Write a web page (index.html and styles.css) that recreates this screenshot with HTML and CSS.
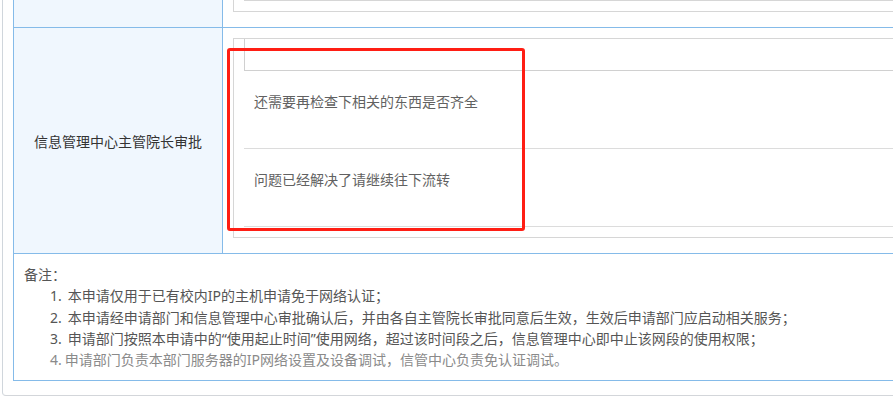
FILE: index.html
```html
<!DOCTYPE html>
<html lang="zh-CN">
<head>
<meta charset="utf-8">
<title>审批</title>
<link rel="stylesheet" href="styles.css">
</head>
<body>
<div class="card">
  <table class="form-table">
    <tr class="row-top">
      <td class="label-cell"></td>
      <td class="value-cell value-cell-top">
        <div class="op-box op-box-cut">
          <div class="op-line"></div>
        </div>
      </td>
    </tr>
    <tr>
      <td class="label-cell">信息管理中心主管院长审批</td>
      <td class="value-cell">
        <div class="op-box">
          <div class="op-head"></div>
          <div class="op-row">还需要再检查下相关的东西是否齐全</div>
          <div class="op-row">问题已经解决了请继续往下流转</div>
        </div>
      </td>
    </tr>
    <tr>
      <td class="notes-cell" colspan="2">
        <div class="notes-title">备注：</div>
        <div class="note"><span class="num">1.</span>本申请仅用于已有校内IP的主机申请免于网络认证；</div>
        <div class="note"><span class="num">2.</span>本申请经申请部门和信息管理中心审批确认后，并由各自主管院长审批同意后生效，生效后申请部门应启动相关服务；</div>
        <div class="note"><span class="num">3.</span>申请部门按照本申请中的“使用起止时间”使用网络，超过该时间段之后，信息管理中心即中止该网段的使用权限；</div>
        <div class="note note-light"><span class="num num-tight">4.</span>申请部门负责本部门服务器的IP网络设置及设备调试，信管中心负责免认证调试。</div>
      </td>
    </tr>
  </table>
</div>
<div class="annotation"></div>
</body>
</html>
```
FILE: styles.css
```css
html, body {
  margin: 0;
  padding: 0;
  background: #ffffff;
  overflow: hidden;
}
body {
  width: 893px;
  height: 420px;
  font-family: "Noto Sans CJK SC", "Noto Sans", sans-serif;
  font-size: 14px;
  color: #333;
}
.card {
  margin-left: 2px;
  width: 1100px;
  border-left: 1px solid #d0d6dc;
  border-bottom: 1px solid #d3d6da;
  border-radius: 0 0 0 4px;
  padding: 0 10px 14px 10px;
}
.form-table {
  width: 100%;
  border-collapse: collapse;
  table-layout: fixed;
  border-left: 1px solid #85bbe9;
  border-bottom: 1px solid #85bbe9;
}
.form-table td {
  padding: 0;
  border: none;
}
.form-table tr + tr td {
  border-top: 1px solid #85bbe9;
}
.label-cell {
  width: 208px;
  background: #f0f7fe;
  border-right: 1px solid #85bbe9 !important;
  text-align: center;
  vertical-align: middle;
  color: #333;
  line-height: 20px;
}
.value-cell {
  padding: 10px 0 15px 10px !important;
  vertical-align: top;
}
.value-cell-top {
  padding-top: 0 !important;
}
.op-box {
  border: 1px solid #d6d6d6;
  border-right: none;
  padding: 0 0 10px 10px;
}
.op-box-cut {
  border-top: none;
}
.op-line {
  border-bottom: 1px solid #d6d6d6;
}
.op-head {
  height: 31px;
  border-left: 1px solid #d0d0d0;
  border-bottom: 1px solid #d0d0d0;
}
.op-row {
  height: 57px;
  padding: 20px 0 0 10px;
  line-height: 20px;
  border-bottom: 1px solid #dcdcdc;
  color: #616161;
}
.notes-cell {
  padding: 10px 10px 10px 10px !important;
  line-height: 21.3px;
  color: #555;
  font-family: "Noto Sans", "Noto Sans CJK SC", sans-serif;
}
.note {
  padding-left: 26px;
}
.num {
  margin-right: 6px;
}
.num-tight {
  margin-right: 3px;
}
.note-light {
  color: #8a8a8a;
}
.annotation {
  position: absolute;
  left: 227px;
  top: 48px;
  width: 292px;
  height: 177px;
  border: 3px solid #ff1e14;
  border-radius: 3px;
}
```
